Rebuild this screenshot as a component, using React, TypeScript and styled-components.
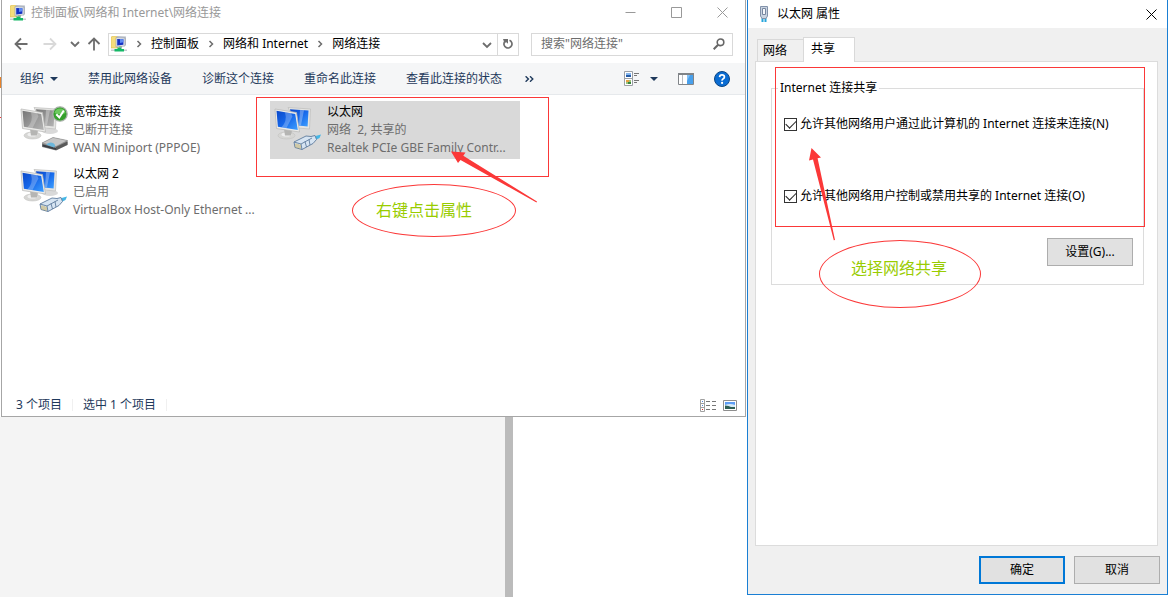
import React, { useState } from "react";
import styled, { createGlobalStyle, css } from "styled-components";

const RED = "#fb3838";

const GlobalStyle = createGlobalStyle`
  * { box-sizing: border-box; }
  body {
    margin: 0;
    background: #fff;
    color: #000;
    font: 12px/18px "Noto Sans", "Noto Sans CJK SC", sans-serif;
  }
  button, input { font: inherit; color: inherit; margin: 0; }
  h1, h2, p, ul { margin: 0; padding: 0; font: inherit; }
  svg { display: block; flex: none; }
`;

const Desktop = styled.div`
  display: grid;
  grid-template-columns: minmax(0, 1fr) 421px;
  padding: 0 2px 2px 0;
  min-height: 100vh;
`;

const Column = styled.div`
  display: flex;
  flex-direction: column;
  background: linear-gradient(#fff 77px, #e8832a 77px, #e8832a 88px, #fff 88px, #fff 117px, ${RED} 117px, ${RED} 118px, #fff 118px) 0 0 / 1px 100% no-repeat;
`;

const Backdrop = styled.div`
  display: flex;
  flex: 1;
  margin-bottom: -2px;
  background: #fff;
`;

const BackdropPage = styled.div`
  flex: 0 1 505px;
  background: #f4f4f4;
`;

const BackdropBar = styled.div`
  flex: 0 0 8px;
  background: #bbb;
`;

/* ---------- explorer window ---------- */

const Explorer = styled.section`
  position: relative;
  display: flex;
  flex-direction: column;
  margin: 0 1px;
  border: 1px solid #a6a6a6;
  border-top: 0;
  background: #fff;
`;

const TitleBar = styled.header`
  display: flex;
  align-items: center;
  gap: 5px;
  height: 25px;
  padding-left: 8px;
  color: #999;
`;

const Title = styled.h1`
  flex: 1;
`;

const PlainButton = styled.button`
  display: flex;
  align-items: center;
  justify-content: center;
  padding: 0;
  border: 0;
  background: none;
`;

const Captions = styled.div`
  display: flex;
`;

const CaptionButton = styled(PlainButton)`
  width: 46px;
  height: 25px;
  color: #999;
`;

const AddressRow = styled.nav`
  display: flex;
  align-items: center;
  height: 38px;
  padding: 0 12px 0 8px;
  color: #6d6d6d;
`;

const NavButton = styled(PlainButton)<{ $wide?: boolean; $dim?: boolean }>`
  width: ${(p) => (p.$wide ? 30 : 20)}px;
  height: 22px;
  color: ${(p) => (p.$dim ? "#d9d9d9" : "#6d6d6d")};
`;

const NavButtons = styled.div`
  display: flex;
  width: 98px;
  margin-left: -4px;
  margin-right: 4px;
`;

const AddressBox = styled.div`
  display: flex;
  align-items: center;
  flex: 1;
  height: 23px;
  padding-left: 2px;
  border: 1px solid #d9d9d9;
  color: #6d6d6d;
`;

const Crumb = styled.a`
  color: #000;
  text-decoration: none;
  white-space: nowrap;
`;

const CrumbArrow = styled.span`
  display: flex;
  justify-content: center;
  width: 24px;
`;

const AddressEnd = styled.div`
  display: flex;
  align-self: stretch;
  margin-left: auto;
`;

const RefreshButton = styled(PlainButton)`
  width: 21px;
  border-left: 1px solid #d9d9d9;
  color: #6d6d6d;
`;

const SearchBox = styled.label`
  display: flex;
  align-items: center;
  width: 202px;
  height: 23px;
  margin-left: 12px;
  padding: 0 7px 0 9px;
  border: 1px solid #d9d9d9;
`;

const SearchInput = styled.input`
  flex: 1;
  min-width: 0;
  padding: 0;
  border: 0;
  outline: 0;
  background: none;
  &::placeholder { color: #6d6d6d; opacity: 1; }
`;

const CommandBar = styled.div`
  display: flex;
  align-items: center;
  gap: 30px;
  height: 32px;
  padding: 0 15px 0 18px;
  border-bottom: 1px solid #e6e9ec;
  background: #f5f6f7;
  color: #1e395b;
`;

const Command = styled(PlainButton)`
  gap: 6px;
  white-space: nowrap;
`;

const MoreButton = styled(Command)`
  margin-left: -7px;
`;

const CommandTools = styled.div`
  display: flex;
  align-items: center;
  gap: 20px;
  margin-left: auto;
`;

const ViewButton = styled(PlainButton)`
  gap: 10px;
`;

const Items = styled.ul`
  display: grid;
  grid-template-columns: 250px 250px;
  grid-auto-rows: 58px;
  align-content: start;
  gap: 4px;
  min-height: 297px;
  padding: 6px 14px;
  list-style: none;
`;

const Item = styled.li<{ $selected?: boolean }>`
  display: flex;
  gap: 5px;
  padding: 2px 4px;
  background: ${(p) => (p.$selected ? "#d9d9d9" : "transparent")};
  svg { margin-top: 3px; }
`;

const ItemText = styled.div`
  min-width: 0;
  color: #6d6d6d;
`;

const ItemLine = styled.p<{ $strong?: boolean }>`
  white-space: pre;
  color: ${(p) => (p.$strong ? "#000" : "inherit")};
`;

const StatusBar = styled.footer`
  display: flex;
  align-items: center;
  height: 24px;
  padding: 2px 8px 0 14px;
  color: #1e395b;
`;

const StatusText = styled.span`
  margin-right: 10px;
  padding-right: 10px;
  border-right: 1px solid #f0f0f0;
  line-height: 12px;
`;

const StatusTools = styled.div`
  display: flex;
  align-items: center;
  gap: 6px;
  margin-left: auto;
`;

/* ---------- properties dialog ---------- */

const Dialog = styled.section`
  display: flex;
  flex-direction: column;
  border: 1px solid #1a7fd4;
  border-top: 0;
  background: #f0f0f0;
`;

const DialogTitleBar = styled(TitleBar)`
  height: 28px;
  padding: 0 8px;
  background: #fff;
  color: #000;
`;

const CloseButton = styled(PlainButton)`
  width: 16px;
  height: 16px;
`;

const Tabs = styled.div`
  display: flex;
  align-items: flex-end;
  height: 33px;
  padding: 0 9px;
`;

const Tab = styled.button<{ $active?: boolean }>`
  width: 46px;
  height: 22px;
  padding: 0 5px;
  border: 1px solid #d9d9d9;
  border-width: 1px 0 0 1px;
  background: #f0f0f0;
  text-align: left;
  ${(p) =>
    p.$active &&
    css`
      z-index: 1;
      width: 52px;
      height: 25px;
      margin-bottom: -1px;
      padding: 0 7px 3px;
      border-right-width: 1px;
      background: #fff;
    `}
`;

const TabPanel = styled.div`
  position: relative;
  flex: 1;
  margin: 0 9px 0 7px;
  padding: 17px 13px 17px 15px;
  border: 1px solid #dcdcdc;
  background: #fff;
`;

const Group = styled.fieldset`
  display: flex;
  flex-direction: column;
  min-width: 0;
  margin: 0;
  padding: 18px 10px 18px 6px;
  border: 1px solid #dcdcdc;
`;

const GroupLegend = styled.legend`
  padding: 0 2px;
`;

const CheckLabel = styled.label`
  display: flex;
  align-items: center;
  gap: 3px;
  margin-left: 6px;
  white-space: nowrap;
  & + & { margin-top: 54px; }
`;

const CheckBox = styled.input`
  appearance: none;
  display: grid;
  place-items: center;
  flex: none;
  width: 13px;
  height: 13px;
  border: 1px solid #333;
  background: #fff;
  &:checked::after {
    content: "";
    width: 9px;
    height: 5px;
    border: solid #222;
    border-width: 0 0 1px 1px;
    transform: translateY(-1px) rotate(-45deg);
  }
`;

const DialogButton = styled.button<{ $primary?: boolean }>`
  width: 86px;
  height: 28px;
  padding: 0;
  border: ${(p) => (p.$primary ? "2px solid #0078d7" : "1px solid #adadad")};
  background: #e1e1e1;
`;

const SettingsButton = styled(DialogButton)`
  align-self: flex-end;
  margin-top: 33px;
`;

const DialogActions = styled.footer`
  display: flex;
  justify-content: flex-end;
  gap: 9px;
  padding: 10px 7px;
`;

/* ---------- annotations drawn over the windows ---------- */

const Highlight = styled.div<{ $x: number; $y: number; $w: number; $h: number }>`
  position: absolute;
  left: ${(p) => p.$x}px;
  top: ${(p) => p.$y}px;
  width: ${(p) => p.$w}px;
  height: ${(p) => p.$h}px;
  border: 1px solid ${RED};
  pointer-events: none;
`;

const Callout = styled.div<{ $x: number; $y: number; $w: number; $h: number; $pad: string }>`
  position: absolute;
  left: ${(p) => p.$x}px;
  top: ${(p) => p.$y}px;
  width: ${(p) => p.$w}px;
  height: ${(p) => p.$h}px;
  padding: ${(p) => p.$pad};
  border: 1px solid ${RED};
  border-radius: 50%;
  color: #99cc00;
  font-size: 16px;
  line-height: 24px;
  pointer-events: none;
`;

const Arrow = styled.svg<{ $x: number; $y: number }>`
  position: absolute;
  left: ${(p) => p.$x}px;
  top: ${(p) => p.$y}px;
  fill: ${RED};
  pointer-events: none;
`;

/* ---------- icons ---------- */

const NetworkIcon = () => (
  <svg width="16" height="16" viewBox="0 0 16 16">
    <path d="M0 1l3-1h4v12H0z" fill="#f5dd7c" stroke="#d9b84c" strokeWidth=".6" />
    <path d="M6 0l9 .5V9l-2 1V2L6 1.5z" fill="#b9bfc8" />
    <path d="M5 1.5l9 .5v8l-9 1z" fill="#dfe3e9" stroke="#959ca8" strokeWidth=".6" />
    <path d="M6.2 3l6.2.2v5.6L6.2 9.5z" fill="#1431c4" />
    <path d="M9 3.1l3.4.1v3L9 7z" fill="#5e8bf2" />
    <path d="M8 10.5h3v1H8z" fill="#888" />
    <path d="M0 13.5h16v1.5H0z" fill="#c7ccd1" />
    <path d="M6.5 11.5h4V13H13v2.5H3.5V13h3z" fill="#14b866" />
  </svg>
);

const Chevron = ({ down }: { down?: boolean }) =>
  down ? (
    <svg width="10" height="8" viewBox="0 0 10 8" fill="none" stroke="currentColor" strokeWidth="1.8">
      <path d="M1 2L5 6L9 2" />
    </svg>
  ) : (
    <svg width="8" height="8" viewBox="0 0 8 8" fill="none" stroke="currentColor" strokeWidth="1.5">
      <path d="M2.5 1L5.5 4L2.5 7" />
    </svg>
  );

const ArrowGlyph = ({ turn }: { turn: number }) => (
  <svg width="14" height="14" viewBox="0 0 14 14" fill="none" stroke="currentColor" strokeWidth="1.8">
    <path d="M1.5 7H13.5M7 1.5L1.5 7L7 12.5" transform={`rotate(${turn} 7 7)`} />
  </svg>
);

const RefreshIcon = () => (
  <svg width="12" height="12" viewBox="0 0 12 12">
    <path d="M7.500 2.300A4 4 0 1 1 2.500 4" fill="none" stroke="currentColor" strokeWidth="1.700" />
    <path d="M1 1h5v4.800L4.400 4.200 2.500 5z" fill="currentColor" />
  </svg>
);

const SearchIcon = () => (
  <svg width="12" height="12" viewBox="0 0 12 12" fill="none" stroke="#666" strokeWidth="1.6">
    <circle cx="7.5" cy="4.3" r="3.3" />
    <path d="M5.1 6.7L.7 11.2" strokeWidth="2" />
  </svg>
);

const Triangle = () => (
  <svg width="8" height="4" viewBox="0 0 8 4" fill="#1e395b">
    <path d="M0 0h8L4 4z" />
  </svg>
);

const MoreIcon = () => (
  <svg width="9" height="6" viewBox="0 0 9 6" fill="none" stroke="#1e395b" strokeWidth="1.4">
    <path d="M.6.3L3.4 3 .6 5.7M5 .3L7.8 3 5 5.7" />
  </svg>
);

const TilesIcon = () => (
  <svg width="16" height="15" viewBox="0 0 16 15">
    <path d="M.5.5h8v14h-8zM.5 7.5h8" fill="#fff" stroke="#9b9fa4" />
    <path d="M2 2h5v2H2z" fill="#86b7ee" />
    <path d="M2 4h5v2H2z" fill="#245ba8" />
    <path d="M2 9h5v4H2z" fill="#9cc47c" />
    <path d="M2 9h3v2H2z" fill="#e5a142" />
    <path d="M4 11h3v2H4z" fill="#39843d" />
    <path d="M10 2.5h5M10 4.5h3M10 9.5h5M10 11.5h3" stroke="#777" />
  </svg>
);

const PaneIcon = () => (
  <svg width="16" height="12" viewBox="0 0 16 12">
    <path d="M.5.5h15v11H.5z" fill="#fff" stroke="#808488" />
    <path d="M0 0h16v2H0z" fill="#808488" />
    <path d="M4.5 2v9" stroke="#b9bdc2" />
    <path d="M9 2h6v9H9z" fill="#48a0ec" />
    <path d="M9 2h3L9 8z" fill="#82c0f5" />
  </svg>
);

const HelpIcon = () => (
  <svg width="16" height="16" viewBox="0 0 16 16">
    <circle cx="8" cy="8" r="7.5" fill="#0a6cd2" stroke="#0b4583" />
    <path d="M5.6 6.1Q5.7 3.9 8 3.9t2.4 2Q10.4 7 9.2 7.7T8.1 9.6" fill="none" stroke="#fff" strokeWidth="1.7" />
    <circle cx="8.1" cy="11.9" r="1.1" fill="#fff" />
  </svg>
);

const DetailsIcon = () => (
  <svg width="17" height="13" viewBox="0 0 17 13">
    <path d="M.5.5h4v12h-4zM.5 4.5h4M.5 8.5h4" fill="#fff" stroke="#a0a0a0" />
    <path d="M6 2.5h4M12 2.5h4M6 6.5h4M12 6.5h4M6 10.5h4M12 10.5h4" stroke="#777" />
    <path d="M2 2h1v1H2zM2 6h1v1H2z" fill="#5588dd" />
    <path d="M2 10h1v1H2z" fill="#d22" />
  </svg>
);

const LargeIconsIcon = () => (
  <svg width="14" height="11" viewBox="0 0 14 11">
    <path d="M.5.5h13v10H.5z" fill="#fff" stroke="#8e8e8e" />
    <path d="M2 2h10v7H2z" fill="#5d9df5" />
    <path d="M2 5q5-2 10 0v2H2z" fill="#d7ebf8" />
    <path d="M2 5.5q4 0 6 1.5h4v2H2z" fill="#2e5f55" />
  </svg>
);

const Monitors = ({ on }: { on: boolean }) => {
  const id = on ? "screen-on" : "screen-off";
  return (
    <>
      <defs>
        <linearGradient id={id} x1="0" y1="0" x2="1" y2="1">
          <stop offset="0" stopColor={on ? "#0b48c9" : "#777"} />
          <stop offset=".5" stopColor={on ? "#1668ea" : "#969696"} />
          <stop offset="1" stopColor={on ? "#3fa0ff" : "#b4b4b4"} />
        </linearGradient>
      </defs>
      <ellipse cx="30" cy="25" rx="8" ry="3" fill="#d9d9d9" />
      <path d="M14 1.5L36.500 3 35.500 23 24 22z" fill="#e4e4e2" stroke="#bdbdbb" strokeWidth=".7" />
      <path d="M16 3.200L34.500 4.500 33.600 20.500 20 19z" fill={`url(#${id})`} />
      <path d="M26 4l4 .3-3 15-2-.4z" fill="#fff" opacity=".3" />
      <ellipse cx="12.500" cy="29.500" rx="8.500" ry="3.500" fill="#d6d6d4" stroke="#bcbcba" strokeWidth=".5" />
      <ellipse cx="12.500" cy="28.500" rx="5" ry="2" fill="#efefef" />
      <path d="M10 23l8 1.500-1 5h-6z" fill="#b5b5b3" />
      <path d="M1 3L22.500 6.500 25.500 26 2.500 22.500z" fill="#ececea" stroke="#b6b6b4" strokeWidth=".7" />
      <path d="M2.500 4.800L21.200 8 23.800 24 3.900 20.800z" fill={`url(#${id})`} />
      <path d="M11 6.300l6 1 1.500 3-6 11.800-5-.8q6-6 3.500-15z" fill="#fff" opacity=".25" />
    </>
  );
};

const EthernetIcon = () => (
  <svg width="48" height="48" viewBox="0 0 48 48">
    <Monitors on />
    <path d="M38 31l9-2.500-1.500 3.500-6 3z" fill="#45b7e6" />
    <path d="M20 36l12-6 5 .5 4-1 1.500 4-3.500 4-11 6-7-2z" fill="#d6e4f2" stroke="#5f7c9d" strokeWidth=".9" />
    <path d="M20 36l7 2 1 5.500M27 38l11-6M31 35.500l1.500 5.500M35 33.500l1 5.500" fill="none" stroke="#5f7c9d" strokeWidth=".9" />
    <path d="M22 37.500v4M24 38v4.200M26 38.700v4" stroke="#c9a94c" strokeWidth=".9" />
  </svg>
);

const BroadbandIcon = () => (
  <svg width="48" height="48" viewBox="0 0 48 48">
    <Monitors on={false} />
    <path d="M22 37l11-5.500 14.500 3V39L36 44.500 22 41z" fill="#8b8b8b" />
    <path d="M22 37l11-5.500 14.500 3L36 40.500z" fill="#c6c6c6" stroke="#8b8b8b" strokeWidth=".6" />
    <path d="M22.500 38.300L36 42v2L22.500 40.500z" fill="#3b3f45" />
    <path d="M26 38.500q4-3 7-1.500 3.500 2 1 4.500z" fill="#6cb7dc" />
    <path d="M36 41l11.500-5.500v3.200L36 44.300z" fill="#595959" />
    <circle cx="40" cy="8" r="7.200" fill="#35a02c" stroke="#a9b0a9" strokeWidth="1.300" />
    <path d="M34.500 7a5.600 5.600 0 0 1 11 0q-5 2.500-11 0z" fill="#6cc95e" />
    <path d="M36.300 8.300l3 3.200 4.500-7" fill="none" stroke="#fff" strokeWidth="2" />
  </svg>
);

const AdapterIcon = () => (
  <svg width="16" height="16" viewBox="0 0 16 16">
    <path d="M6.500 12v4M9.500 12v4" stroke="#27a5dc" strokeWidth="2" />
    <path d="M4.500.5h7v9.500l-1.500 2.500H6L4.500 10z" fill="#c9d3e0" stroke="#8292aa" />
    <path d="M6.500 2.500h3v6h-3z" fill="#f6f8fb" stroke="#7787a0" />
  </svg>
);

const Cross = () => (
  <svg width="11" height="11" viewBox="0 0 11 11" stroke="currentColor">
    <path d="M.5.5l10 10M10.500.5l-10 10" />
  </svg>
);

/* ---------- windows ---------- */

type Connection = { name: string; status: string; device: string; icon: React.ReactNode; selected?: boolean };

const connections: Connection[] = [
  { name: "宽带连接", status: "已断开连接", device: "WAN Miniport (PPPOE)", icon: <BroadbandIcon /> },
  { name: "以太网", status: "网络  2, 共享的", device: "Realtek PCIe GBE Family Contr...", icon: <EthernetIcon />, selected: true },
  { name: "以太网 2", status: "已启用", device: "VirtualBox Host-Only Ethernet ...", icon: <EthernetIcon /> },
];

const crumbs = ["控制面板", "网络和 Internet", "网络连接"];
const commands = ["禁用此网络设备", "诊断这个连接", "重命名此连接", "查看此连接的状态"];

const ExplorerWindow = () => (
  <Explorer>
    <TitleBar>
      <NetworkIcon />
      <Title>控制面板\网络和 Internet\网络连接</Title>
      <Captions>
        <CaptionButton aria-label="最小化">
          <svg width="11" height="11" viewBox="0 0 11 11" stroke="currentColor"><path d="M.5 5.5h10" /></svg>
        </CaptionButton>
        <CaptionButton aria-label="最大化">
          <svg width="11" height="11" viewBox="0 0 11 11" fill="none" stroke="currentColor"><path d="M.5.5h10v10H.5z" /></svg>
        </CaptionButton>
        <CaptionButton aria-label="关闭"><Cross /></CaptionButton>
      </Captions>
    </TitleBar>
    <AddressRow>
      <NavButtons>
        <NavButton $wide aria-label="后退"><ArrowGlyph turn={0} /></NavButton>
        <NavButton $wide $dim aria-label="前进"><ArrowGlyph turn={180} /></NavButton>
        <NavButton aria-label="最近"><Chevron down /></NavButton>
        <NavButton aria-label="向上"><ArrowGlyph turn={90} /></NavButton>
      </NavButtons>
      <AddressBox>
        <NetworkIcon />
        {crumbs.map((c) => (
          <React.Fragment key={c}>
            <CrumbArrow><Chevron /></CrumbArrow>
            <Crumb href="#">{c}</Crumb>
          </React.Fragment>
        ))}
        <AddressEnd>
          <NavButton aria-label="展开"><Chevron down /></NavButton>
          <RefreshButton aria-label="刷新"><RefreshIcon /></RefreshButton>
        </AddressEnd>
      </AddressBox>
      <SearchBox>
        <SearchInput aria-label="搜索" placeholder={'搜索"网络连接"'} />
        <SearchIcon />
      </SearchBox>
    </AddressRow>
    <CommandBar>
      <Command>组织 <Triangle /></Command>
      {commands.map((c) => <Command key={c}>{c}</Command>)}
      <MoreButton aria-label="更多"><MoreIcon /></MoreButton>
      <CommandTools>
        <ViewButton aria-label="更改视图"><TilesIcon /><Triangle /></ViewButton>
        <PlainButton aria-label="预览窗格"><PaneIcon /></PlainButton>
        <PlainButton aria-label="帮助"><HelpIcon /></PlainButton>
      </CommandTools>
    </CommandBar>
    <Items>
      {connections.map((c) => (
        <Item key={c.name} $selected={c.selected}>
          {c.icon}
          <ItemText>
            <ItemLine $strong>{c.name}</ItemLine>
            <ItemLine>{c.status}</ItemLine>
            <ItemLine>{c.device}</ItemLine>
          </ItemText>
        </Item>
      ))}
    </Items>
    <StatusBar>
      <StatusText>3 个项目</StatusText>
      <StatusText>选中 1 个项目</StatusText>
      <StatusTools>
        <PlainButton aria-label="详细信息"><DetailsIcon /></PlainButton>
        <PlainButton aria-label="大图标"><LargeIconsIcon /></PlainButton>
      </StatusTools>
    </StatusBar>
    <Highlight $x={254} $y={97} $w={293} $h={80} />
    <Arrow $x={449} $y={150} width="87" height="54" viewBox="0 0 87 54">
      <path d="M0 1.5L14.500 2.500 12.300 5.800 86 51.500 85.500 52.500 9.500 9.900 7 13z" />
    </Arrow>
    <Callout $x={350} $y={184} $w={164} $h={53} $pad="13px 0 0 23px">右键点击属性</Callout>
  </Explorer>
);

const PropertiesDialog = () => {
  const [connect, setConnect] = useState(true);
  const [control, setControl] = useState(true);
  return (
    <Dialog role="dialog" aria-label="以太网 属性">
      <DialogTitleBar>
        <AdapterIcon />
        <Title as="h2">以太网 属性</Title>
        <CloseButton aria-label="关闭"><Cross /></CloseButton>
      </DialogTitleBar>
      <Tabs role="tablist">
        <Tab role="tab" aria-selected={false}>网络</Tab>
        <Tab role="tab" aria-selected $active>共享</Tab>
      </Tabs>
      <TabPanel role="tabpanel">
        <Group>
          <GroupLegend>Internet 连接共享</GroupLegend>
          <CheckLabel>
            <CheckBox type="checkbox" checked={connect} onChange={(e) => setConnect(e.target.checked)} />
            允许其他网络用户通过此计算机的 Internet 连接来连接(N)
          </CheckLabel>
          <CheckLabel>
            <CheckBox type="checkbox" checked={control} onChange={(e) => setControl(e.target.checked)} />
            允许其他网络用户控制或禁用共享的 Internet 连接(O)
          </CheckLabel>
          <SettingsButton>设置(G)...</SettingsButton>
        </Group>
        <Highlight $x={19} $y={5} $w={370} $h={160} />
        <Arrow $x={52} $y={86} width="28" height="94" viewBox="0 0 28 94">
          <path d="M3.500 0L13 9.500 9.600 10.300 27 92 25.800 92.300 5 11.500 1 12.500z" />
        </Arrow>
        <Callout $x={63} $y={178} $w={162} $h={68} $pad="15px 0 0 31px">选择网络共享</Callout>
      </TabPanel>
      <DialogActions>
        <DialogButton $primary>确定</DialogButton>
        <DialogButton>取消</DialogButton>
      </DialogActions>
    </Dialog>
  );
};

export default function App() {
  return (
    <>
      <GlobalStyle />
      <Desktop>
        <Column>
          <ExplorerWindow />
          <Backdrop>
            <BackdropPage />
            <BackdropBar />
          </Backdrop>
        </Column>
        <PropertiesDialog />
      </Desktop>
    </>
  );
}
